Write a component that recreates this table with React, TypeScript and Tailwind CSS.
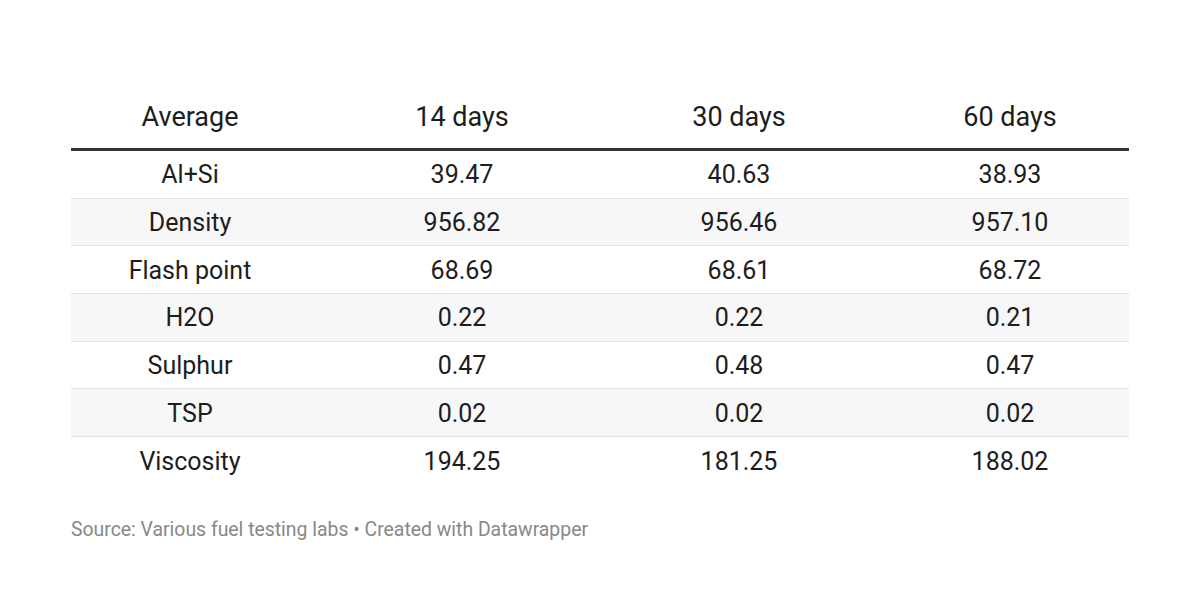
const header = ['Average', '14 days', '30 days', '60 days']

const rows = [
  ['Al+Si', '39.47', '40.63', '38.93'],
  ['Density', '956.82', '956.46', '957.10'],
  ['Flash point', '68.69', '68.61', '68.72'],
  ['H2O', '0.22', '0.22', '0.21'],
  ['Sulphur', '0.47', '0.48', '0.47'],
  ['TSP', '0.02', '0.02', '0.02'],
  ['Viscosity', '194.25', '181.25', '188.02'],
]

const cols = 'grid grid-cols-[238px_306px_248px_266px]'
const cell = ['', '', '', 'pl-[28px]']

export default function App() {
  return (
    <div className="min-h-screen bg-white font-['Roboto','Liberation_Sans',sans-serif] text-[#1d1d1d]">
      <div className="ml-[71px] w-[1058px] pt-[102px]">
        <div className={`${cols} border-b-[3px] border-[#333333] pb-[15px] text-[27px] leading-[31px]`}>
          {header.map((h, i) => (
            <div key={h} className={`text-center ${cell[i]}`}>{h}</div>
          ))}
        </div>
        {rows.map((r, ri) => (
          <div
            key={r[0]}
            className={`${cols} h-[47.7px] items-center pt-[2px] text-[25px] leading-[30px] ${ri % 2 === 1 ? 'bg-[#f7f7f7]' : 'bg-white'} ${ri < rows.length - 1 ? 'border-b border-[#e2e2e2]' : ''}`}
          >
            {r.map((v, i) => (
              <div key={i} className={`text-center ${cell[i]}`}>{v}</div>
            ))}
          </div>
        ))}
        <div className="mt-[33px] text-[19.4px] leading-[24px] text-[#888888]">
          Source: Various fuel testing labs • Created with Datawrapper
        </div>
      </div>
    </div>
  )
}
